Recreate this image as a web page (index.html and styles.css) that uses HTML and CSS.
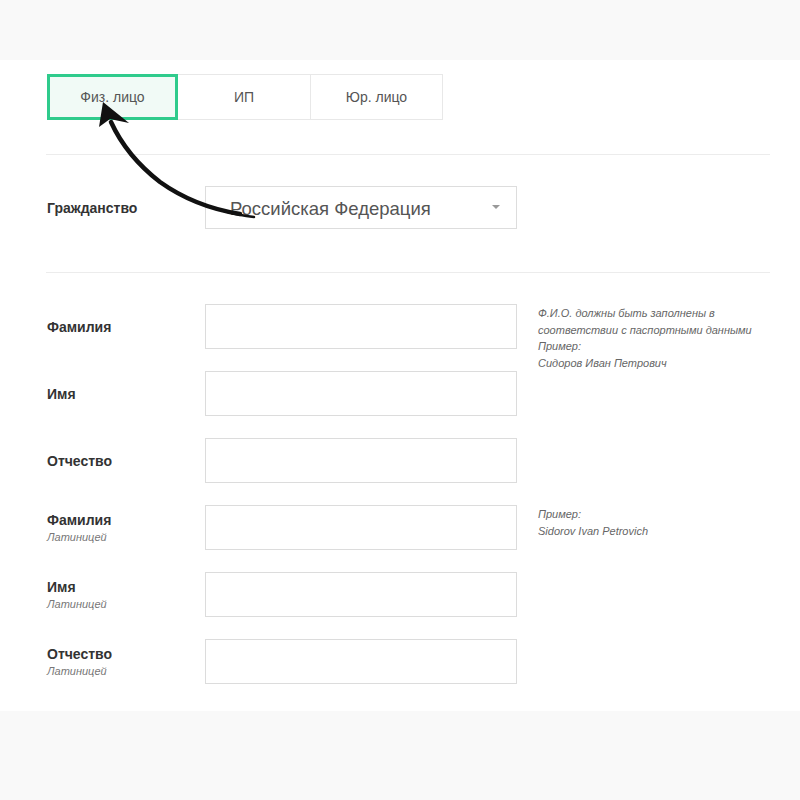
FILE: index.html
```html
<!DOCTYPE html>
<html lang="ru">
<head>
    <meta charset="UTF-8">
    <meta name="viewport" content="width=device-width, initial-scale=1.0">
    <title>Анкета</title>
    <link rel="stylesheet" href="styles.css">
</head>
<body>
    <div class="top-band"></div>
    <div class="panel">
        <div class="tabs">
            <div class="tab active">Физ. лицо</div>
            <div class="tab">ИП</div>
            <div class="tab">Юр. лицо</div>
        </div>

        <div class="divider"></div>

        <div class="row citizenship">
            <div class="label">Гражданство</div>
            <div class="select">
                <span>Российская Федерация</span>
                <span class="caret"></span>
            </div>
        </div>

        <div class="divider"></div>

        <div class="fields">
            <div class="label">Фамилия</div>
            <div class="input"></div>
            <div class="hint span3">
                Ф.И.О. должны быть заполнены в<br>
                соответствии с паспортными данными<br>
                Пример:<br>
                Сидоров Иван Петрович
            </div>

            <div class="label">Имя</div>
            <div class="input"></div>

            <div class="label">Отчество</div>
            <div class="input"></div>

            <div class="label">Фамилия<span class="sub">Латиницей</span></div>
            <div class="input"></div>
            <div class="hint span3">
                Пример:<br>
                Sidorov Ivan Petrovich
            </div>

            <div class="label">Имя<span class="sub">Латиницей</span></div>
            <div class="input"></div>

            <div class="label">Отчество<span class="sub">Латиницей</span></div>
            <div class="input"></div>
        </div>

        <!-- pointer arrow drawn over the form -->
        <svg class="arrow" width="300" height="170" viewBox="0 0 300 170">
            <path d="M240 154 C 215 150, 188 142, 160 122 C 138 105, 122 86, 111 62" fill="none" stroke="#111" stroke-width="4.5" stroke-linecap="round"/>
            <path d="M254 157 C 246 156, 238 155, 228 152" fill="none" stroke="#111" stroke-width="2.5" stroke-linecap="round"/>
            <polygon points="103,42 99,67 110,59 129,63" fill="#111"/>
        </svg>
    </div>
</body>
</html>
```

FILE: styles.css
```css
* {
    box-sizing: border-box;
}

body {
    margin: 0;
    background-color: #f9f9f9;
    font-family: "Liberation Sans", Arial, sans-serif;
    color: #333;
}

.top-band {
    height: 60px;
}

.panel {
    position: relative;
    background: #fff;
    padding: 14px 30px 27px 47px;
}

.tabs {
    display: flex;
}

.tab {
    width: 132px;
    height: 46px;
    display: flex;
    align-items: center;
    justify-content: center;
    border: 1px solid #e8e8e8;
    border-left: none;
    font-size: 14px;
    color: #555;
}

.tab:nth-child(2) {
    width: 133px;
}

.tab.active {
    width: 131px;
    border: 3px solid #2fcb8c;
    background-color: #f1faf6;
}

.divider {
    height: 1px;
    background-color: #ececec;
    margin: 34px 0 31px -1px;
}

.citizenship + .divider {
    margin-top: 43px;
}

.row {
    display: flex;
    align-items: center;
}

.label {
    font-size: 14px;
    font-weight: bold;
    color: #333;
}

.citizenship .label {
    width: 158px;
}

.select {
    width: 312px;
    height: 43px;
    border: 1px solid #ddd;
    display: flex;
    align-items: center;
    justify-content: space-between;
    padding: 2px 16px 0 24px;
    font-size: 18.5px;
    color: #555;
}

.caret {
    width: 0;
    height: 0;
    border-left: 4px solid transparent;
    border-right: 4px solid transparent;
    border-top: 4px solid #999;
    margin-top: -4px;
}

.fields {
    display: grid;
    grid-template-columns: 158px 312px 1fr;
    row-gap: 22px;
    align-items: center;
}

.fields .label {
    grid-column: 1;
    display: flex;
    flex-direction: column;
    gap: 3px;
}

.fields .input {
    grid-column: 2;
    height: 45px;
    border: 1px solid #dcdcdc;
}

.sub {
    font-size: 11px;
    font-weight: normal;
    font-style: italic;
    color: #777;
}

.hint {
    grid-column: 3;
    align-self: start;
    padding-left: 21px;
    padding-top: 1px;
    font-size: 11px;
    font-style: italic;
    line-height: 16.5px;
    color: #666;
}

.hint.span3 {
    grid-row: span 3;
}

.arrow {
    position: absolute;
    left: 0;
    top: 0;
    pointer-events: none;
}
```
